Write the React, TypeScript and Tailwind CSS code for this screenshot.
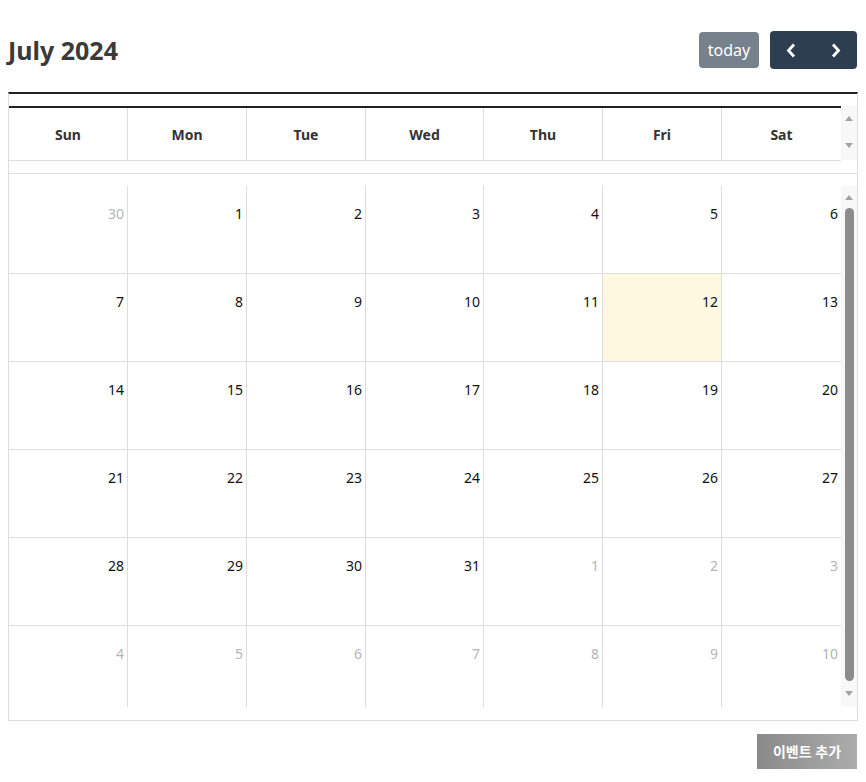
import React from "react";

const days = ["Sun", "Mon", "Tue", "Wed", "Thu", "Fri", "Sat"];

type Cell = { day: number; other: boolean; today?: boolean };

const buildWeeks = (): Cell[][] => {
  const cells: Cell[] = [{ day: 30, other: true }];
  for (let d = 1; d <= 31; d++) cells.push({ day: d, other: false, today: d === 12 });
  for (let d = 1; d <= 10; d++) cells.push({ day: d, other: true });
  const weeks: Cell[][] = [];
  for (let i = 0; i < 6; i++) weeks.push(cells.slice(i * 7, i * 7 + 7));
  return weeks;
};

const cols = "grid grid-cols-[119px_119px_119px_118px_119px_119px_119px]";

const ArrowUp = () => (
  <svg width="8" height="5" viewBox="0 0 8 5">
    <polygon points="0,5 4,0 8,5" fill="#a3a3a3" />
  </svg>
);

const ArrowDown = () => (
  <svg width="8" height="5" viewBox="0 0 8 5">
    <polygon points="0,0 8,0 4,5" fill="#a3a3a3" />
  </svg>
);

const App = () => {
  const weeks = buildWeeks();

  return (
    <div
      className="px-2 pt-[31px] bg-white min-h-[782px] text-[#222]"
      style={{ fontFamily: '"Noto Sans", "Noto Sans CJK KR", sans-serif' }}
    >
      {/* toolbar */}
      <div className="flex items-center justify-between h-[38px] w-[849px]">
        <h2 className="text-[25px] font-bold text-[#3a3a3a] leading-none">July 2024</h2>
        <div className="flex items-center gap-[11px]">
          <button className="h-[36px] w-[60px] rounded bg-[#77818c] text-white text-[16px]">
            today
          </button>
          <div className="flex h-[38px] w-[87px] rounded bg-[#2c3e50]">
            <button className="flex-1 flex items-center justify-center pr-[2px]">
              <svg width="10" height="15" viewBox="0 0 10 15">
                <polyline points="8,1.5 2.5,7.5 8,13.5" fill="none" stroke="white" strokeWidth="2.8" />
              </svg>
            </button>
            <button className="flex-1 flex items-center justify-center pl-[2px]">
              <svg width="10" height="15" viewBox="0 0 10 15">
                <polyline points="2,1.5 7.5,7.5 2,13.5" fill="none" stroke="white" strokeWidth="2.8" />
              </svg>
            </button>
          </div>
        </div>
      </div>

      {/* calendar grid */}
      <div className="mt-[23px] w-[850px] border-t-2 border-t-[#222] border-x border-b border-[#ddd]">
        {/* header section */}
        <div className="flex pt-[12px] border-b border-[#ddd]">
          <div className="w-[832px] pb-[12px]">
            <div className="border-t-2 border-[#222]">
              <div className={`${cols} border-b border-[#ddd]`}>
                {days.map((d, i) => (
                  <div
                    key={d}
                    className={`h-[52px] flex items-center justify-center text-[14px] font-bold text-[#333] ${
                      i < 6 ? "border-r border-[#ddd]" : ""
                    }`}
                  >
                    {d}
                  </div>
                ))}
              </div>
            </div>
          </div>
          <div className="w-[16px] h-[54px] bg-[#f8f8f8] flex flex-col items-center justify-between pt-[10px] pb-[12px]">
            <ArrowUp />
            <ArrowDown />
          </div>
        </div>

        {/* body section */}
        <div className="flex pt-[12px] pb-[13px]">
          <div className="w-[832px] h-[521px] overflow-hidden">
            {weeks.map((week, wi) => (
              <div key={wi} className={`${cols} h-[88px] border-b border-[#ddd]`}>
                {week.map((c, ci) => (
                  <div
                    key={ci}
                    className={`flex justify-end pt-[18px] pr-[3px] text-[14px] ${
                      ci < 6 ? "border-r border-[#ddd]" : ""
                    } ${c.today ? "bg-[#fff8e1]" : ""} ${c.other ? "text-[#b5b5b5]" : "text-[#111]"}`}
                  >
                    <span className="leading-[20px] h-[20px]">{c.day}</span>
                  </div>
                ))}
              </div>
            ))}
          </div>
          <div className="w-[16px] h-[521px] bg-[#f8f8f8] flex flex-col items-center pt-[9px] pb-[11px]">
            <ArrowUp />
            <div className="mt-[8px] w-[9px] flex-1 rounded-full bg-[#8c8c8c]" />
            <div className="mt-[10px]">
              <ArrowDown />
            </div>
          </div>
        </div>
      </div>

      {/* add event */}
      <div className="flex justify-end w-[849px] mt-[13px]">
        <button className="w-[100px] h-[35px] bg-gradient-to-r from-[#8a8a8a] to-[#acacac] text-white text-[14px] font-bold">
          이벤트 추가
        </button>
      </div>
    </div>
  );
};

export default App;
